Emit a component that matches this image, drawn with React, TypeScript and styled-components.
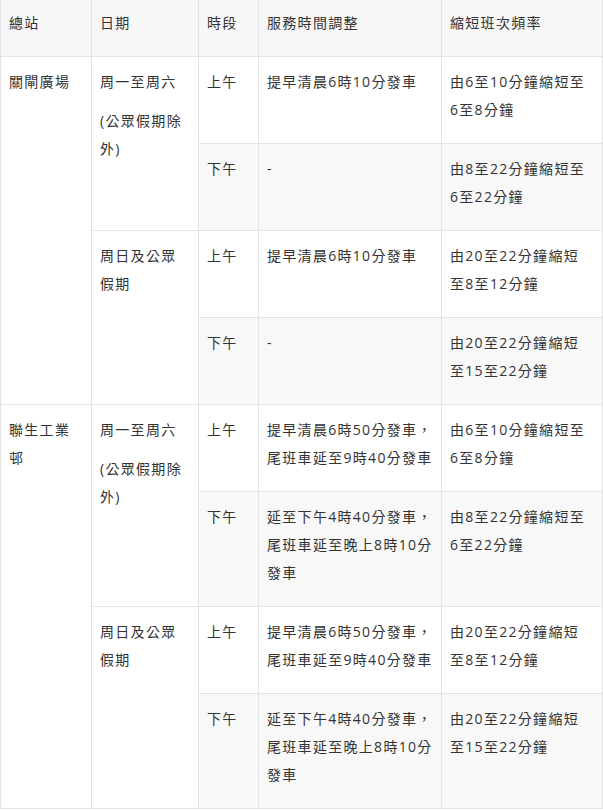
import React from "react";
import styled, { createGlobalStyle, css } from "styled-components";

const Global = createGlobalStyle`
  html, body { margin: 0; padding: 0; background: #fff; }
  body {
    font-family: "Open Sans", "Noto Sans CJK TC", "Noto Sans", sans-serif;
    color: #333;
  }
`;

const Table = styled.table`
  width: 602px;
  table-layout: fixed;
  border-collapse: collapse;
  font-size: 14px;
  line-height: 28px;
  letter-spacing: 1.3px;
  color: #333;
`;

const HeadCell = styled.th`
  background: #f7f7f7;
  border: 1px solid #e3e3e3;
  border-top: none;
  padding: 9px 8px 19px;
  text-align: left;
  font-weight: normal;
  vertical-align: top;
`;

const Row = styled.tr<{ $striped?: boolean }>`
  ${(p) =>
    p.$striped &&
    css`
      & > td {
        background: #f8f8f8;
      }
    `}
`;

const Cell = styled.td`
  border: 1px solid #e3e3e3;
  padding: 11px 6px 19px 8px;
  vertical-align: top;
  text-align: left;
  background: #fff;
`;

const Para = styled.p`
  margin: 0 0 11px;
  &:last-child {
    margin-bottom: 0;
  }
`;

/* Multi-line text: each entry is one visual line as in the source table */
const Lines = ({ lines }: { lines: string[] }) => (
  <>
    {lines.map((l, i) => (
      <React.Fragment key={i}>
        {i > 0 && <br />}
        {l}
      </React.Fragment>
    ))}
  </>
);

type Slot = { period: string; service: string[]; freq: string[] };
type DateGroup = { date: string[][]; slots: Slot[] };
type Station = { name: string[]; groups: DateGroup[] };

const morning1 = ["提早清晨6時10分發車"];
const morning2 = ["提早清晨6時50分發車，", "尾班車延至9時40分發車"];
const afternoon2 = ["延至下午4時40分發車，", "尾班車延至晚上8時10分", "發車"];

const weekdays = [["周一至周六"], ["(公眾假期除", "外)"]];
const holidays = [["周日及公眾", "假期"]];

const stations: Station[] = [
  {
    name: ["關閘廣場"],
    groups: [
      {
        date: weekdays,
        slots: [
          { period: "上午", service: morning1, freq: ["由6至10分鐘縮短至", "6至8分鐘"] },
          { period: "下午", service: ["-"], freq: ["由8至22分鐘縮短至", "6至22分鐘"] },
        ],
      },
      {
        date: holidays,
        slots: [
          { period: "上午", service: morning1, freq: ["由20至22分鐘縮短", "至8至12分鐘"] },
          { period: "下午", service: ["-"], freq: ["由20至22分鐘縮短", "至15至22分鐘"] },
        ],
      },
    ],
  },
  {
    name: ["聯生工業", "邨"],
    groups: [
      {
        date: weekdays,
        slots: [
          { period: "上午", service: morning2, freq: ["由6至10分鐘縮短至", "6至8分鐘"] },
          { period: "下午", service: afternoon2, freq: ["由8至22分鐘縮短至", "6至22分鐘"] },
        ],
      },
      {
        date: holidays,
        slots: [
          { period: "上午", service: morning2, freq: ["由20至22分鐘縮短", "至8至12分鐘"] },
          { period: "下午", service: afternoon2, freq: ["由20至22分鐘縮短", "至15至22分鐘"] },
        ],
      },
    ],
  },
];

const headers = ["總站", "日期", "時段", "服務時間調整", "縮短班次頻率"];
const widths = [91, 107, 60, 183, 161];

export default function App() {
  const rows: React.ReactNode[] = [];
  let idx = 0;
  stations.forEach((st) => {
    const stationSpan = st.groups.reduce((n, g) => n + g.slots.length, 0);
    st.groups.forEach((g, gi) => {
      g.slots.forEach((s, si) => {
        const striped = idx % 2 === 1;
        rows.push(
          <Row key={idx} $striped={striped}>
            {gi === 0 && si === 0 && (
              <Cell rowSpan={stationSpan}>
                <Lines lines={st.name} />
              </Cell>
            )}
            {si === 0 && (
              <Cell rowSpan={g.slots.length}>
                {g.date.map((d, di) => (
                  <Para key={di}>
                    <Lines lines={d} />
                  </Para>
                ))}
              </Cell>
            )}
            <Cell>{s.period}</Cell>
            <Cell>
              <Lines lines={s.service} />
            </Cell>
            <Cell>
              <Lines lines={s.freq} />
            </Cell>
          </Row>
        );
        idx++;
      });
    });
  });

  return (
    <>
      <Global />
      <Table>
        <colgroup>
          {widths.map((w, i) => (
            <col key={i} style={{ width: w }} />
          ))}
        </colgroup>
        <thead>
          <tr>
            {headers.map((h) => (
              <HeadCell key={h}>{h}</HeadCell>
            ))}
          </tr>
        </thead>
        <tbody>{rows}</tbody>
      </Table>
    </>
  );
}
